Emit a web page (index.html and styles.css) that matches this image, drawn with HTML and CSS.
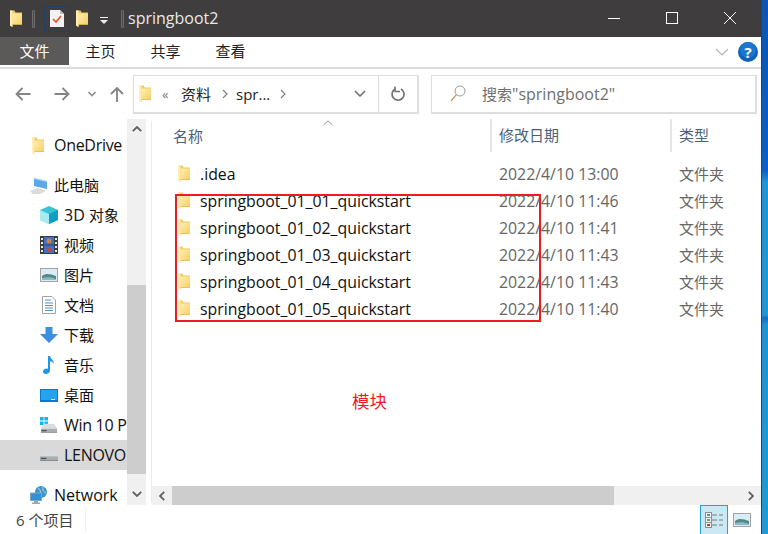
FILE: index.html
```html
<!DOCTYPE html>
<html lang="zh-CN">
<head>
<meta charset="utf-8">
<title>springboot2</title>
<link rel="stylesheet" href="styles.css">
</head>
<body>
<svg class="defs" width="0" height="0" aria-hidden="true">
  <defs>
    <linearGradient id="fbody" x1="0" y1="0" x2="1" y2="1">
      <stop offset="0" stop-color="#fff0b4"/>
      <stop offset="1" stop-color="#f6cf64"/>
    </linearGradient>
  </defs>
  <symbol id="folder" viewBox="0 0 12 17">
    <path d="M0 0.5H4.5L5.5 2.5H12V14.5H2.5V17L0 15.5Z" fill="#f3c95c"/>
    <path d="M2.5 3.5H12V14H2.5Z" fill="url(#fbody)"/>
    <path d="M0 0.5H2.5V17L0 15.5Z" fill="#fdeeb8"/>
    <path d="M2.5 14H12V14.8H2.5Z" fill="#e2b94f"/>
  </symbol>
  <symbol id="drive" viewBox="0 0 20 12">
    <path d="M4 1H16L20 7H0Z" fill="#d9dcde"/>
    <path d="M0 7H20V11H0Z" fill="#a9adb0"/>
    <path d="M1 8.5H7V10H1Z" fill="#4c4f52"/>
    <path d="M0 11H20V12H0Z" fill="#7f8386"/>
  </symbol>
</svg>
<div class="screen">
  <div class="window">
    <header class="titlebar">
      <svg class="i12 t-folder1"><use href="#folder"/></svg>
      <span class="t-sep t-sep1"></span>
      <span class="qa-box">
        <svg width="14" height="17" viewBox="0 0 14 17"><path d="M0 0H10L14 4V17H0Z" fill="#f2f2f2"/><path d="M10 0L14 4H10Z" fill="#bdbdbd"/><path d="M3 9L6 12L11 6" fill="none" stroke="#e0562a" stroke-width="1.7"/></svg>
      </span>
      <svg class="i12 t-folder2"><use href="#folder"/></svg>
      <svg class="t-drop" width="8" height="8" viewBox="0 0 8 8"><path d="M0 0H8V1H0Z" fill="#eee"/><path d="M0 3H8L4 7Z" fill="#eee"/></svg>
      <span class="t-sep t-sep2"></span>
      <span class="t-title">springboot2</span>
      <span class="winctl">
        <svg width="14" height="14" viewBox="0 0 14 14"><path d="M1 7.5H13" stroke="#fff" stroke-width="1"/></svg>
        <svg width="14" height="14" viewBox="0 0 14 14"><rect x="1.5" y="1.5" width="11" height="11" fill="none" stroke="#fff"/></svg>
        <svg width="14" height="14" viewBox="0 0 14 14"><path d="M1 1L13 13M13 1L1 13" stroke="#fff" stroke-width="1"/></svg>
      </span>
    </header>

    <nav class="ribbon">
      <span class="tab tab-file">文件</span>
      <span class="tab">主页</span>
      <span class="tab">共享</span>
      <span class="tab">查看</span>
      <span class="ribbon-right">
        <svg width="14" height="8" viewBox="0 0 14 8"><path d="M1 1L7 7L13 1" fill="none" stroke="#b4b4b4" stroke-width="1.2"/></svg>
        <svg width="20" height="20" viewBox="0 0 20 20"><circle cx="10" cy="10" r="10" fill="#0f62b8"/><circle cx="10" cy="8" r="8" fill="#1a78cf"/><text class="help-q" x="10" y="15.5" text-anchor="middle">?</text></svg>
      </span>
    </nav>

    <section class="addressbar">
      <svg class="nav-back" width="16" height="14" viewBox="0 0 16 14"><path d="M15.5 7H1.5M7.5 1L1.5 7L7.5 13" fill="none" stroke="#848484" stroke-width="1.8"/></svg>
      <svg class="nav-fwd" width="16" height="14" viewBox="0 0 16 14"><path d="M0.5 7H14.5M8.5 1L14.5 7L8.5 13" fill="none" stroke="#848484" stroke-width="1.8"/></svg>
      <svg class="nav-down" width="8" height="6" viewBox="0 0 8 6"><path d="M0.5 1L4 4.5L7.5 1" fill="none" stroke="#909090" stroke-width="1.6"/></svg>
      <svg class="nav-up" width="14" height="16" viewBox="0 0 14 16"><path d="M7 16V2M1 8L7 2L13 8" fill="none" stroke="#848484" stroke-width="1.8"/></svg>
      <div class="addr-box">
        <svg class="i12 addr-folder"><use href="#folder"/></svg>
        <span class="crumb-more">«</span>
        <span class="crumb crumb-a">资料</span>
        <svg class="crumb-sep" width="6" height="10" viewBox="0 0 6 10"><path d="M1 1L5 5L1 9" fill="none" stroke="#808080" stroke-width="1.2"/></svg>
        <span class="crumb crumb-b">spr...</span>
        <svg class="crumb-sep crumb-sep2" width="6" height="10" viewBox="0 0 6 10"><path d="M1 1L5 5L1 9" fill="none" stroke="#808080" stroke-width="1.2"/></svg>
        <span class="addr-fill"></span>
        <svg class="addr-drop" width="12" height="7" viewBox="0 0 12 7"><path d="M1 1L6 6L11 1" fill="none" stroke="#6c6c6c" stroke-width="1.5"/></svg>
        <span class="addr-refresh">
          <svg width="16" height="16" viewBox="0 0 16 16"><path d="M5.5 2.8A6 6 0 1 0 11 3" fill="none" stroke="#727272" stroke-width="1.7"/><path d="M5 0.5V5.5H10" fill="none" stroke="#727272" stroke-width="1.5"/></svg>
        </span>
      </div>
      <div class="search-box">
        <svg width="16" height="17" viewBox="0 0 16 17"><circle cx="10" cy="6" r="5" fill="none" stroke="#9a9a9a"/><path d="M6.5 9.5L1 16" stroke="#c99a6a" stroke-width="1.2"/></svg>
        <span class="search-text"><span class="cjk">搜索</span>"springboot2"</span>
      </div>
    </section>

    <main class="content">
      <aside class="sidebar">
        <ul class="tree">
          <li class="row top gap-a"><svg class="i12 ic-one"><use href="#folder"/></svg><span class="tight">OneDrive</span></li>
          <li class="row top">
            <svg class="ic" width="18" height="17" viewBox="0 0 18 17"><path d="M4 1L17 4V12L4 9Z" fill="#5aa9e6"/><path d="M4 1L17 4V5L4 2Z" fill="#b7d9f2"/><path d="M0 14L8 11L16 14L10 17H3Z" fill="#d8dcdf"/></svg><span class="cjk up">此电脑</span>
          </li>
          <li class="row sub">
            <svg class="ic" width="18" height="18" viewBox="0 0 18 18"><path d="M9 0L18 4V14L9 18L0 14V4Z" fill="#35c3d6"/><path d="M0 4L9 8V18L0 14Z" fill="#a6ecf2"/><path d="M9 8L18 4V14L9 18Z" fill="#119dc4"/></svg><span>3D <span class="cjk">对象</span></span>
          </li>
          <li class="row sub">
            <svg class="ic" width="18" height="18" viewBox="0 0 18 18"><rect width="18" height="18" fill="#3d3d3d"/><rect x="4" y="1" width="10" height="7.5" fill="#3f72c8"/><rect x="4" y="9.5" width="10" height="7.5" fill="#3f72c8"/><circle cx="9" cy="5" r="2.4" fill="#d9803c"/><circle cx="9" cy="13.5" r="2.4" fill="#c24a36"/><path d="M1 2h2v2H1zM1 6h2v2H1zM1 10h2v2H1zM1 14h2v2H1zM15 2h2v2h-2zM15 6h2v2h-2zM15 10h2v2h-2zM15 14h2v2h-2z" fill="#e8e8e8"/></svg><span class="cjk up">视频</span>
          </li>
          <li class="row sub">
            <svg class="ic" width="18" height="14" viewBox="0 0 18 14"><rect x="0.5" y="0.5" width="17" height="13" fill="#dcecf6" stroke="#a3a3a3"/><path d="M2 8C6 5 10 6 16 8V12H2Z" fill="#4f8a86"/><path d="M2 10C7 9 12 9 16 11V12H2Z" fill="#8fb7c9"/></svg><span class="cjk up">图片</span>
          </li>
          <li class="row sub">
            <svg class="ic ic-doc" width="14" height="18" viewBox="0 0 14 18"><path d="M0.5 0.5H10L13.5 4V17.5H0.5Z" fill="#fff" stroke="#a3a3a3"/><path d="M3 4H9M3 7H11M3 9.5H11M3 12H11M3 14.5H11" stroke="#5b8fc2"/></svg><span class="cjk up">文档</span>
          </li>
          <li class="row sub">
            <svg class="ic" width="18" height="16" viewBox="0 0 18 16"><path d="M5.5 0H12.5V7H18L9 16L0 7H5.5Z" fill="#3a8fe0"/></svg><span class="cjk up">下载</span>
          </li>
          <li class="row sub">
            <svg class="ic ic-note" width="12" height="18" viewBox="0 0 12 18"><path d="M5 0H7C7.5 3 11 4 11 8C10 6 8.5 5.5 7 5.3V14.5C7 16.8 4.8 18 2.8 18C1.2 18 0 17 0 15.6C0 13.8 2 12.6 3.6 12.6C4 12.6 4.6 12.7 5 13Z" fill="#1c97ea"/></svg><span class="cjk up">音乐</span>
          </li>
          <li class="row sub">
            <svg class="ic" width="18" height="13" viewBox="0 0 18 13"><rect width="18" height="13" fill="#0b78d0"/><rect x="1" y="1" width="16" height="10" fill="#25a4ee"/><path d="M11 10H15V11H11Z" fill="#d6eefb"/></svg><span class="cjk up">桌面</span>
          </li>
          <li class="row sub">
            <span class="ic drive-wrap">
              <svg class="win-logo" width="8" height="8" viewBox="0 0 8 8"><path d="M0 0H3.6V3.6H0ZM4.4 0H8V3.6H4.4ZM0 4.4H3.6V8H0ZM4.4 4.4H8V8H4.4Z" fill="#12b4ee"/></svg>
              <svg class="win-drive" width="18" height="10" viewBox="0 0 20 12"><use href="#drive"/></svg>
            </span><span class="tight">Win 10 P</span>
          </li>
          <li class="row sub selected gap-c">
            <svg class="ic" width="18" height="11" viewBox="0 0 20 12"><use href="#drive"/></svg><span class="tight">LENOVO</span>
          </li>
          <li class="row top">
            <svg class="ic" width="18" height="18" viewBox="0 0 18 18"><circle cx="11" cy="6" r="6" fill="#3f93c9"/><path d="M8 2C10 3 11 5 10 8M13 1C12 4 14 6 16 7" stroke="#b8dcef" fill="none"/><rect x="0.5" y="7" width="11" height="7.5" fill="#2f8fd8" stroke="#7fa9c6"/><path d="M4 15H8V16.5H10V18H2V16.5H4Z" fill="#9aa6ad"/></svg><span>Network</span>
          </li>
        </ul>
      </aside>
      <div class="nav-scroll">
        <span class="sb-btn"><svg width="10" height="6" viewBox="0 0 10 6"><path d="M0.8 5.2L5 1L9.2 5.2" fill="none" stroke="#606060" stroke-width="1.8"/></svg></span>
        <span class="sb-track"></span>
        <span class="sb-thumb"></span>
        <span class="sb-btn sb-btn-low"><svg width="10" height="6" viewBox="0 0 10 6"><path d="M0.8 0.8L5 5L9.2 0.8" fill="none" stroke="#606060" stroke-width="1.8"/></svg></span>
      </div>
      <div class="files">
        <div class="file-view">
          <div class="head">
            <span class="col-name">名称</span>
            <span class="col-date">修改日期</span>
            <span class="col-type">类型</span>
          </div>
          <ul class="list">
            <li class="file"><svg class="i12"><use href="#folder"/></svg><span class="f-name">.idea</span><span class="f-date">2022/4/10 13:00</span><span class="f-type">文件夹</span></li>
            <li class="file"><svg class="i12"><use href="#folder"/></svg><span class="f-name">springboot_01_01_quickstart</span><span class="f-date">2022/4/10 11:46</span><span class="f-type">文件夹</span></li>
            <li class="file"><svg class="i12"><use href="#folder"/></svg><span class="f-name">springboot_01_02_quickstart</span><span class="f-date">2022/4/10 11:41</span><span class="f-type">文件夹</span></li>
            <li class="file"><svg class="i12"><use href="#folder"/></svg><span class="f-name">springboot_01_03_quickstart</span><span class="f-date">2022/4/10 11:43</span><span class="f-type">文件夹</span></li>
            <li class="file"><svg class="i12"><use href="#folder"/></svg><span class="f-name">springboot_01_04_quickstart</span><span class="f-date">2022/4/10 11:43</span><span class="f-type">文件夹</span></li>
            <li class="file"><svg class="i12"><use href="#folder"/></svg><span class="f-name">springboot_01_05_quickstart</span><span class="f-date">2022/4/10 11:40</span><span class="f-type">文件夹</span></li>
          </ul>
        </div>
        <div class="h-scroll">
          <span class="hs-btn"><svg width="6" height="10" viewBox="0 0 6 10"><path d="M5.2 0.8L1 5L5.2 9.2" fill="none" stroke="#606060" stroke-width="1.8"/></svg></span>
          <span class="hs-thumb"></span>
          <span class="hs-track"></span>
          <span class="hs-btn"><svg width="6" height="10" viewBox="0 0 6 10"><path d="M0.8 0.8L5 5L0.8 9.2" fill="none" stroke="#606060" stroke-width="1.8"/></svg></span>
        </div>
      </div>
    </main>

    <footer class="status">
      <span class="status-text">6 个项目</span>
      <span class="status-sep"></span>
      <span class="status-fill"></span>
      <span class="view-btn view-on">
        <svg width="18" height="16" viewBox="0 0 18 16"><rect x="0.5" y="0.5" width="6" height="15" fill="#f4f4f4" stroke="#8e8e8e"/><path d="M0.5 5.5H6.5M0.5 10.5H6.5" stroke="#8e8e8e"/><rect x="2" y="2" width="3" height="2" fill="#5b8fc2"/><rect x="2" y="7" width="3" height="2" fill="#6aa84f"/><rect x="2" y="12" width="3" height="2" fill="#c0392b"/><path d="M7 3H12M14 3H18M7 8H12M14 8H18M7 13H12M14 13H18" stroke="#7a7a7a"/></svg>
      </span>
      <span class="view-btn">
        <svg width="18" height="14" viewBox="0 0 18 14"><rect x="0.5" y="0.5" width="17" height="13" fill="#dcecf6" stroke="#a3a3a3"/><path d="M2 8C6 5 10 6 16 8V12H2Z" fill="#4f8a86"/><path d="M2 10C7 9 12 9 16 11V12H2Z" fill="#8fb7c9"/></svg>
      </span>
    </footer>

    <div class="annot-box"></div>
    <div class="annot-text">模块</div>
    <svg class="sort-caret" width="10" height="6" viewBox="0 0 10 6"><path d="M0.5 5L5 0.8L9.5 5" fill="none" stroke="#9a9a9a"/></svg>
  </div>
  <div class="desktop"></div>
</div>
</body>
</html>
```
FILE: styles.css
```css
* { box-sizing: border-box; }
html, body { margin: 0; padding: 0; height: 100%; }
body {
  width: 768px;
  height: 534px;
  overflow: hidden;
  background: #fff;
  font-family: "Open Sans", "Noto Sans CJK SC", sans-serif;
  font-size: 15px;
  color: #1a1a1a;
}
.defs { display: block; height: 0; }
ul { list-style: none; margin: 0; padding: 0; }
svg { display: block; flex: none; }
.i12 { width: 12px; height: 17px; }
.cjk { font-size: 15px; }
.up { position: relative; top: -1px; }
.tight { letter-spacing: -0.3px; }

.screen { display: flex; width: 768px; height: 534px; }
.window {
  position: relative;
  width: 762px;
  height: 534px;
  display: flex;
  flex-direction: column;
  background: #fff;
  border-right: 1px solid #3e3e3e;
}
.desktop {
  flex: 1;
  background: linear-gradient(180deg, #0b55b4 0, #0b5fc8 170px, #1f96d6 182px, #1e97d4 315px, #0f6ec6 318px, #1d93d3 325px, #1f9ad6 534px);
}

/* title bar */
.titlebar {
  height: 37px;
  flex: none;
  background: #3f3d3d;
  display: flex;
  align-items: center;
}
.t-folder1 { margin-left: 10px; }
.t-sep { width: 3px; height: 18px; border: 1px solid #6c6c6c; border-radius: 1px; background: #4a4848; }
.t-sep1 { margin-left: 10px; }
.qa-box {
  width: 26px;
  height: 26px;
  margin-left: 9px;
  border: 1px solid #1f3f66;
  display: flex;
  align-items: center;
  justify-content: center;
}
.t-folder2 { margin-left: 6px; }
.t-drop { margin-left: 12px; margin-top: 4px; }
.t-sep2 { margin-left: 13px; }
.t-title { margin-left: 4px; font-size: 16px; color: #e9e9e9; line-height: 37px; }
.winctl { margin-left: auto; display: flex; gap: 44px; margin-right: 24px; margin-top: -1px; }

/* ribbon */
.ribbon {
  height: 32px;
  flex: none;
  display: flex;
  align-items: flex-start;
  border-bottom: 2px solid #dcdcdc;
  background: #fff;
}
.tab {
  width: 65px;
  height: 28px;
  line-height: 28px;
  text-align: center;
  font-size: 15px;
  color: #222;
}
.tab:nth-child(2) { margin-left: -1px; }
.tab-file { width: 69px; background: #5b5a58; color: #fff; }
.ribbon-right { margin-left: auto; display: flex; align-items: center; gap: 9px; margin-right: 3px; margin-top: 5px; }
.help-q { font-family: "Open Sans", sans-serif; font-size: 15px; font-weight: 700; fill: #fff; }

/* address row */
.addressbar {
  height: 50px;
  flex: none;
  display: flex;
  align-items: center;
}
.nav-back { margin-left: 15px; }
.nav-fwd { margin-left: 23px; }
.nav-down { margin-left: 18px; }
.nav-up { margin-left: 14px; margin-top: -1px; }
.addr-box {
  margin-left: 9px;
  width: 286px;
  height: 39px;
  border: 2px solid #dedede;
  border-width: 1px 2px 2px 1px;
  display: flex;
  align-items: center;
}
.addr-folder { margin-left: 5px; }
.crumb-more { margin-left: 11px; font-size: 13px; color: #777; width: 9px; }
.crumb { font-size: 15px; color: #222; white-space: nowrap; }
.crumb-a { margin-left: 10px; }
.crumb-sep { margin-left: 11px; }
.crumb-b { margin-left: 8px; }
.crumb-sep2 { margin-left: 10px; }
.addr-fill { flex: 1; }
.addr-drop { margin-right: 12px; }
.addr-refresh {
  width: 39px;
  height: 100%;
  border-left: 1px solid #dedede;
  display: flex;
  align-items: center;
  justify-content: center;
}
.search-box {
  margin-left: 12px;
  width: 326px;
  height: 39px;
  border: 1px solid #dedede;
  border-width: 1px 2px 2px 1px;
  display: flex;
  align-items: center;
  padding-left: 18px;
}
.search-text { margin-left: 16px; font-size: 16px; color: #6f6f6f; white-space: nowrap; }

/* main */
.content { flex: 1; min-height: 0; display: flex; }
.sidebar { width: 127px; flex: none; overflow: hidden; padding-top: 11px; }
.row {
  height: 30px;
  display: flex;
  align-items: center;
  white-space: nowrap;
  font-size: 16px;
  color: #111;
}
.row.top { padding-left: 30px; }
.row.top > span { margin-left: 6px; }
.row.sub { padding-left: 40px; }
.row.sub > span:last-child { margin-left: 6px; }
.ic-one { margin-left: 2px; margin-right: 4px; }
.ic { width: 18px; }
.ic-doc { margin: 0 2px; width: 14px; }
.ic-note { margin: 0 3px; width: 12px; }
.gap-a { margin-bottom: 10px; }
.gap-c { margin-bottom: 10px; }
.selected { background: #d9d9d9; }
.drive-wrap { display: flex; flex-direction: column; justify-content: center; }
.win-logo { margin-bottom: -2px; }

.nav-scroll {
  width: 19px;
  flex: none;
  background: #f0f0f0;
  display: flex;
  flex-direction: column;
}
.sb-btn { height: 19px; flex: none; display: flex; align-items: center; justify-content: center; }
.sb-track { height: 147px; flex: none; }
.sb-thumb { flex: 1; background: #cdcdcd; }
.sb-btn-low { height: 31px; padding-top: 8px; }

.files {
  flex: 1;
  min-width: 0;
  margin-left: 6px;
  display: flex;
  flex-direction: column;
  box-shadow: -3px 0 0 -2px #ececec;
}
.file-view { flex: 1; min-height: 0; }
.head { display: flex; height: 33px; font-size: 15px; color: #4c607a; align-items: center; }
.col-name { width: 338px; padding-left: 21px; }
.col-date { width: 180px; height: 33px; line-height: 33px; border-left: 2px solid #e5e5e5; padding-left: 7px; }
.col-type { height: 33px; line-height: 33px; border-left: 2px solid #e5e5e5; padding-left: 7px; }
.list { padding-top: 8px; }
.file { height: 27px; display: flex; align-items: center; white-space: nowrap; font-size: 15.85px; }
.file .i12 { margin-left: 26px; }
.f-name { width: 299px; margin-left: 10px; color: #111; }
.f-date { width: 180px; color: #666; }
.f-type { color: #666; font-size: 15px; }

.h-scroll { height: 19px; flex: none; background: #f0f0f0; display: flex; align-items: stretch; }
.hs-btn { width: 20px; flex: none; display: flex; align-items: center; justify-content: center; }
.hs-thumb { width: 442px; background: #cdcdcd; }
.hs-track { flex: 1; }

/* status */
.status { height: 29px; flex: none; display: flex; align-items: stretch; font-size: 15px; color: #444; }
.status-text { margin-left: 16px; line-height: 30px; }
.status-sep { width: 1px; background: #efefef; margin: 3px 0 3px 12px; }
.status-fill { flex: 1; }
.view-btn { width: 28px; display: flex; align-items: center; justify-content: center; margin-right: 5px; }
.view-on { background: #cce8f5; border: 1px solid #26a0da; border-bottom: 0; margin-right: 0; }

/* overlays */
.annot-box {
  position: absolute;
  left: 175px;
  top: 194px;
  width: 366px;
  height: 128px;
  border: 2px solid #ed1c24;
}
.annot-text { position: absolute; left: 352px; top: 389px; font-size: 17.5px; color: #ed1c24; line-height: 24px; }
.sort-caret { position: absolute; left: 323px; top: 120px; }
```
